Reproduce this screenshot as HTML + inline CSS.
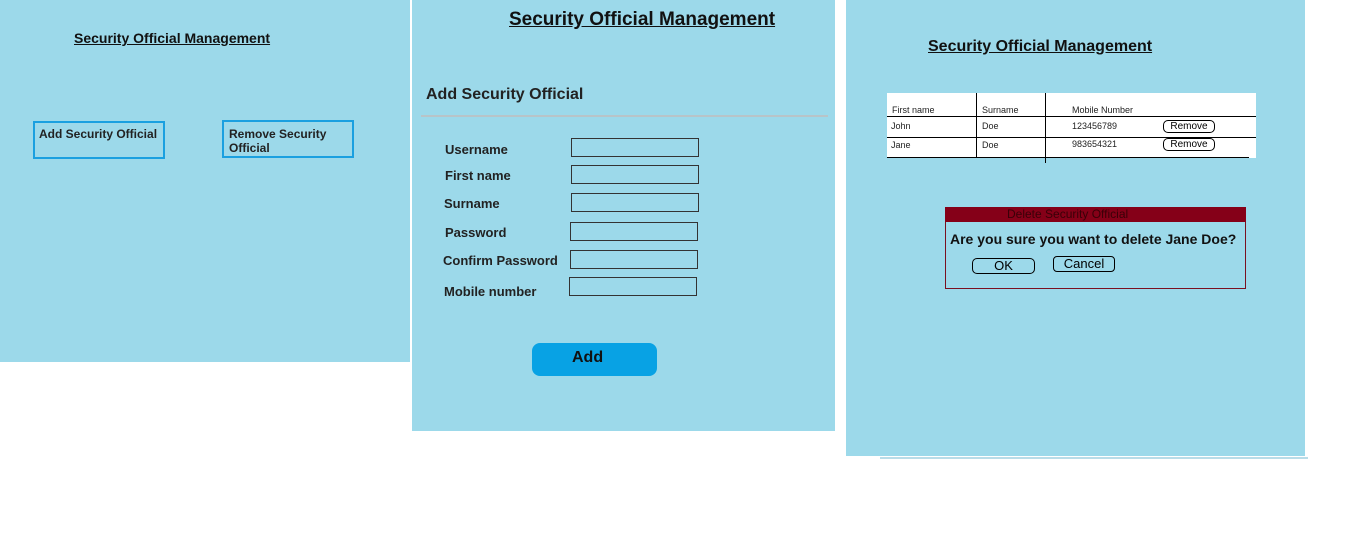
<!DOCTYPE html>
<html><head><meta charset="utf-8"><style>
body{margin:0;width:1360px;height:559px;background:#fff;position:relative;overflow:hidden;font-family:"Liberation Sans",Arial,sans-serif}
.p{position:absolute;background:#9cd9ea}
.a{position:absolute;white-space:nowrap}
.t{font-weight:bold;text-decoration:underline;color:#111}
.lb{font-weight:bold;font-size:13px;color:#222}
.in{position:absolute;width:126px;height:17px;border:1px solid #333;box-sizing:border-box}
.hl{position:absolute;height:1px;background:#000}
.vl{position:absolute;width:1px;background:#000}
.sm{font-size:9px;color:#222}
</style></head><body>
<div class="p" style="left:0;top:0;width:410px;height:362px"></div>
<div class="a t" style="left:74px;top:30px;font-size:14px">Security Official Management</div>
<div class="a" style="left:33px;top:121px;width:132px;height:38px;border:2px solid #1aa0e0;box-sizing:border-box"></div>
<div class="a" style="left:39px;top:127px;font-size:12px;font-weight:bold;color:#222">Add Security Official</div>
<div class="a" style="left:222px;top:120px;width:132px;height:38px;border:2px solid #1aa0e0;box-sizing:border-box"></div>
<div class="a" style="left:229px;top:127px;font-size:12px;font-weight:bold;color:#222;line-height:14px">Remove Security<br>Official</div>

<div class="p" style="left:412px;top:0;width:423px;height:431px"></div>
<div class="a t" style="left:509px;top:9px;font-size:19px">Security Official Management</div>
<div class="a" style="left:426px;top:86px;font-size:16px;font-weight:bold;color:#222">Add Security Official</div>
<div class="a" style="left:421px;top:115px;width:407px;height:2px;background:#b8c4c8"></div>
<div class="a lb" style="left:445px;top:142px">Username</div>
<div class="a lb" style="left:445px;top:168px">First name</div>
<div class="a lb" style="left:444px;top:196px">Surname</div>
<div class="a lb" style="left:445px;top:225px">Password</div>
<div class="a lb" style="left:443px;top:253px">Confirm Password</div>
<div class="a lb" style="left:444px;top:284px">Mobile number</div>
<div class="in" style="left:571px;top:138px;height:19px;width:128px"></div>
<div class="in" style="left:571px;top:165px;height:19px;width:128px"></div>
<div class="in" style="left:571px;top:193px;height:19px;width:128px"></div>
<div class="in" style="left:570px;top:222px;height:19px;width:128px"></div>
<div class="in" style="left:570px;top:250px;height:19px;width:128px"></div>
<div class="in" style="left:569px;top:277px;height:19px;width:128px"></div>
<div class="a" style="left:532px;top:343px;width:125px;height:33px;background:#08a2e4;border-radius:8px"></div>
<div class="a" style="left:572px;top:349px;font-size:16px;font-weight:bold;color:#111">Add</div>

<div class="p" style="left:846px;top:0;width:459px;height:456px"></div>
<div class="a" style="left:880px;top:457px;width:428px;height:2px;background:#b8dce8"></div>
<div class="a t" style="left:928px;top:38px;font-size:16px">Security Official Management</div>
<div class="a" style="left:887px;top:93px;width:369px;height:65px;background:#fff"></div>
<div class="hl" style="left:887px;top:116px;width:369px"></div>
<div class="hl" style="left:887px;top:137px;width:369px"></div>
<div class="hl" style="left:887px;top:157px;width:362px"></div>
<div class="vl" style="left:976px;top:93px;height:65px"></div>
<div class="vl" style="left:1045px;top:93px;height:70px"></div>
<div class="a sm" style="left:892px;top:105px">First name</div>
<div class="a sm" style="left:982px;top:105px">Surname</div>
<div class="a sm" style="left:1072px;top:105px">Mobile Number</div>
<div class="a sm" style="left:891px;top:121px">John</div>
<div class="a sm" style="left:982px;top:121px">Doe</div>
<div class="a sm" style="left:1072px;top:121px">123456789</div>
<div class="a sm" style="left:891px;top:140px">Jane</div>
<div class="a sm" style="left:982px;top:140px">Doe</div>
<div class="a sm" style="left:1072px;top:139px">983654321</div>
<div class="a" style="left:1163px;top:120px;width:50px;height:11px;border:1px solid #000;border-radius:5px;font-size:10px;text-align:center;line-height:11px">Remove</div>
<div class="a" style="left:1163px;top:138px;width:50px;height:11px;border:1px solid #000;border-radius:5px;font-size:10px;text-align:center;line-height:11px">Remove</div>
<div class="a" style="left:945px;top:207px;width:301px;height:82px;border:1px solid #7a1020;box-sizing:border-box"></div>
<div class="a" style="left:945px;top:207px;width:301px;height:15px;background:#850018"></div>
<div class="a" style="left:1007px;top:207px;font-size:12px;color:#3a0008">Delete Security Official</div>
<div class="a" style="left:950px;top:231px;font-size:14px;font-weight:bold;color:#111">Are you sure you want to delete Jane Doe?</div>
<div class="a" style="left:972px;top:258px;width:61px;height:14px;border:1px solid #000;border-radius:5px;font-size:13px;text-align:center;line-height:14px">OK</div>
<div class="a" style="left:1053px;top:256px;width:60px;height:14px;border:1px solid #000;border-radius:4px;font-size:13px;text-align:center;line-height:14px">Cancel</div>
</body></html>
